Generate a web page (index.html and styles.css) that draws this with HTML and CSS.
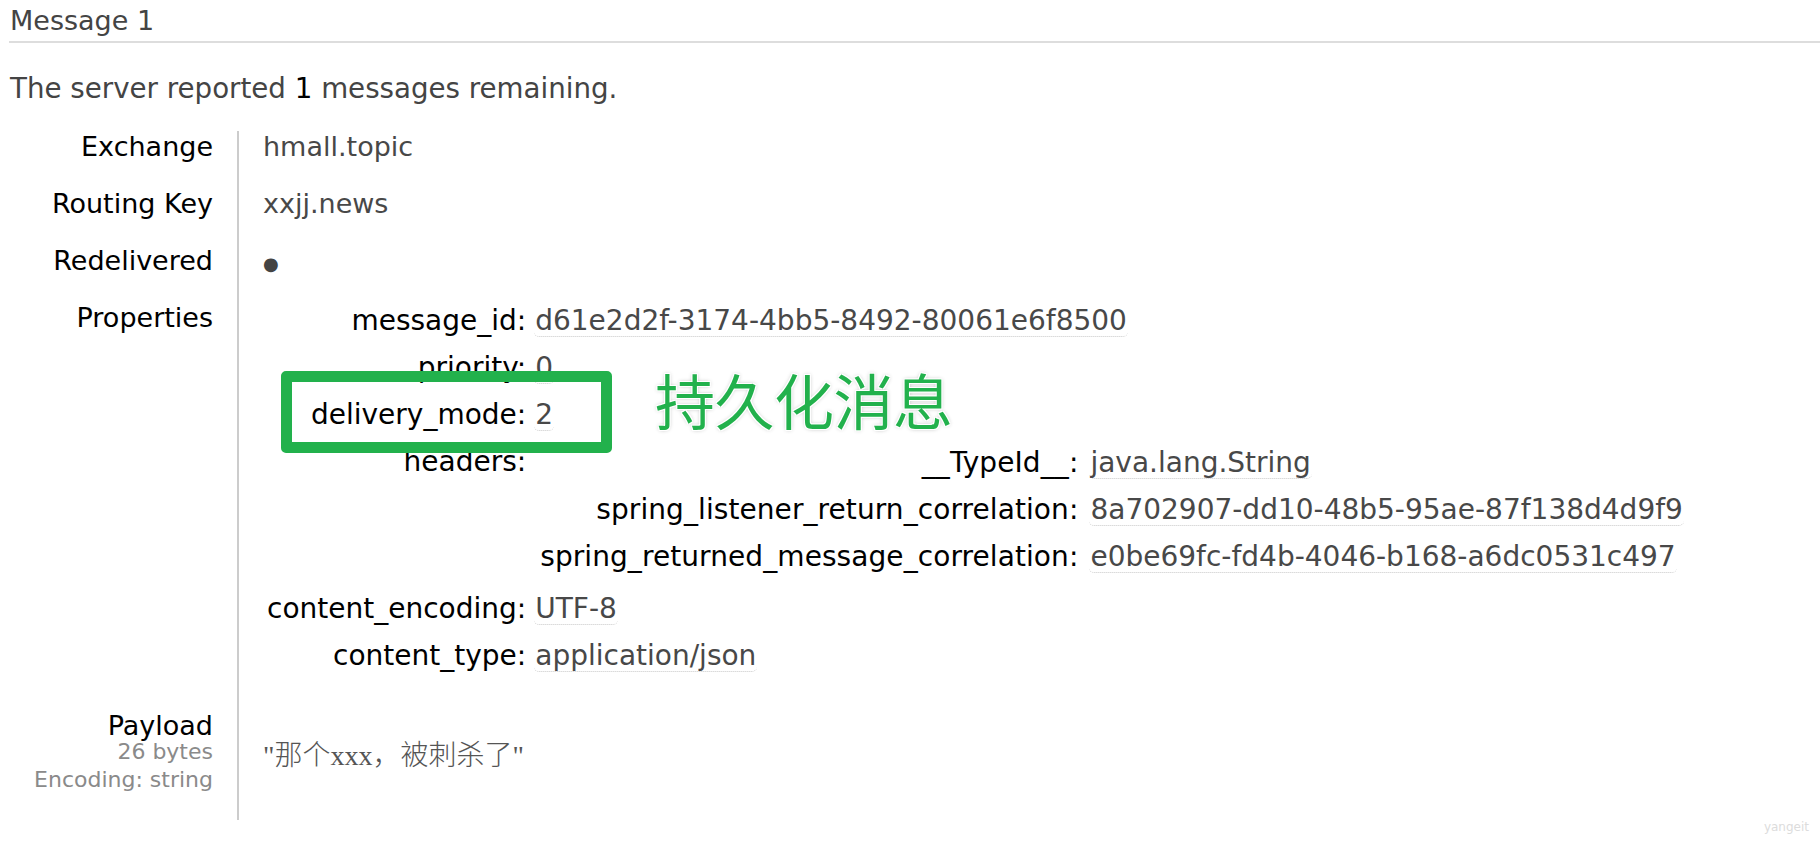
FILE: index.html
```html
<!DOCTYPE html>
<html>
<head>
<meta charset="utf-8">
<title>Message 1</title>
<link rel="stylesheet" href="styles.css">
</head>
<body>
<div class="page">
  <h2 class="title">Message 1</h2>
  <p class="intro">The server reported <span class="count">1</span> messages remaining.</p>
  <table class="msg">
    <tr><th>Exchange</th><td>hmall.topic</td></tr>
    <tr><th>Routing Key</th><td>xxjj.news</td></tr>
    <tr><th>Redelivered</th><td><span class="dot">●</span></td></tr>
    <tr>
      <th>Properties</th>
      <td class="props-cell">
        <table class="props">
          <tr><th>message_id:</th><td><span class="v">d61e2d2f-3174-4bb5-8492-80061e6f8500</span></td></tr>
          <tr><th>priority:</th><td><span class="v">0</span></td></tr>
          <tr><th>delivery_mode:</th><td><span class="v">2</span></td></tr>
          <tr>
            <th>headers:</th>
            <td class="hdr-cell">
              <table class="props inner">
                <tr><th>__TypeId__:</th><td><span class="v">java.lang.String</span></td></tr>
                <tr><th>spring_listener_return_correlation:</th><td><span class="v">8a702907-dd10-48b5-95ae-87f138d4d9f9</span></td></tr>
                <tr><th>spring_returned_message_correlation:</th><td><span class="v">e0be69fc-fd4b-4046-b168-a6dc0531c497</span></td></tr>
              </table>
            </td>
          </tr>
          <tr><th>content_encoding:</th><td><span class="v">UTF-8</span></td></tr>
          <tr><th>content_type:</th><td><span class="v">application/json</span></td></tr>
        </table>
      </td>
    </tr>
    <tr class="payload">
      <th>Payload<div class="sub">26 bytes<br>Encoding: string</div></th>
      <td><span class="payload-text">"那个xxx，被刺杀了"</span></td>
    </tr>
  </table>
  <div class="mark-box"></div>
  <div class="mark-text">持久化消息</div>
  <div class="watermark">yangeit</div>
</div>
</body>
</html>
```

FILE: styles.css
```css
html, body {
  margin: 0;
  padding: 0;
  background: #fff;
}
body {
  font-family: "DejaVu Sans", Verdana, sans-serif;
  font-size: 27px;
  line-height: 31px;
  color: #484848;
}
.page {
  position: relative;
  padding-left: 9px;
  min-height: 844px;
  box-sizing: border-box;
}
.title {
  margin: 0;
  padding: 5px 0 5px 1px;
  font-size: 27px;
  line-height: 31px;
  font-weight: normal;
  color: #444;
  border-bottom: 2px solid #ddd;
}
.intro {
  margin: 30px 0 27px 1px;
  font-size: 27.7px;
  color: #444;
}
.count {
  color: #000;
}
.msg {
  border-collapse: collapse;
}
.msg > tbody > tr > th {
  width: 204px;
  padding: 0 24px 26px 0;
  text-align: right;
  vertical-align: top;
  font-weight: normal;
  color: #000;
}
.msg > tbody > tr > td {
  border-left: 2px solid #ccc;
  padding: 0 0 26px 24px;
  vertical-align: top;
}
.msg > tbody > tr.payload > td {
  vertical-align: middle;
  padding-top: 6px;
}
.dot {
  font-size: 18px;
  line-height: 0;
  color: #444;
}
.props {
  border-collapse: collapse;
  font-size: 28px;
}
.props th {
  padding: 3px 6px 13px 4px;
  text-align: right;
  vertical-align: top;
  font-weight: normal;
  color: #000;
  white-space: nowrap;
}
.props td {
  padding: 3px 0 13px 2px;
  vertical-align: top;
  white-space: nowrap;
}
.props td.hdr-cell {
  padding: 0 0 6px 5px;
}
.props.inner th {
  padding: 4px 6px 12px 3px;
  letter-spacing: 0.08px;
}
.props.inner td {
  padding: 4px 0 12px 5px;
}
.v {
  display: inline-block;
  border-bottom: 1px dotted #c8c8c8;
  border-radius: 0 0 5px 5px;
  margin-bottom: -1px;
  padding: 0 1px;
}
.sub {
  margin-top: -3px;
  font-size: 22px;
  line-height: 28px;
  color: #8a8a8a;
}
.payload-text {
  font-family: "Liberation Serif", "Noto Sans CJK SC", serif;
  font-weight: 300;
  font-size: 28px;
  color: #555;
}
.mark-box {
  position: absolute;
  left: 281px;
  top: 371px;
  width: 331px;
  height: 82px;
  box-sizing: border-box;
  border: 11px solid #22b14c;
  border-radius: 5px;
}
.mark-text {
  position: absolute;
  left: 655px;
  top: 369px;
  font-family: "Noto Sans CJK SC", sans-serif;
  font-size: 60px;
  line-height: 60px;
  letter-spacing: -0.5px;
  color: #22b14c;
  text-shadow: 0 0 1px #fff, 1px 1px 0 #fff, -1px -1px 0 #fff, 1px -1px 0 #fff, -1px 1px 0 #fff, 0 0 4px rgba(0, 0, 0, 0.3);
}
.watermark {
  position: absolute;
  right: 11px;
  bottom: 10px;
  font-family: "DejaVu Sans", sans-serif;
  font-size: 12px;
  line-height: 14px;
  color: #dcdcdc;
}
```
